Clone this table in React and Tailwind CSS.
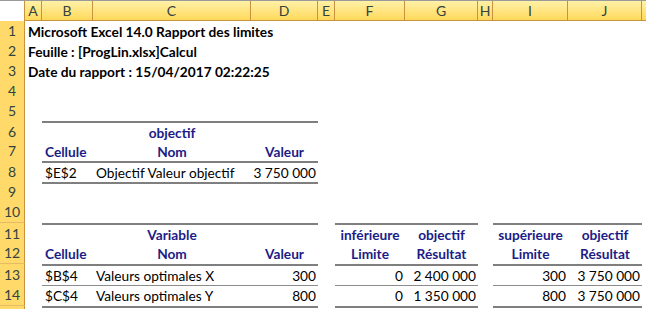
import React from "react";

const GRID = "grid grid-cols-[25px_17px_51px_158px_67px_17px_70px_73px_15px_75px_74px_4px]";
const COLS = ["A", "B", "C", "D", "E", "F", "G", "H", "I", "J"];
const NAVY = "text-[#1c1c86]";
const LINE2 = "border-t-2 border-[#7f7f7f]";
const LINE1 = "border-t border-[#8c8c8c]";

function HeaderRow() {
  return (
    <div className={`${GRID} h-[21px] border-t border-[#9a9a9a]`}>
      <div className="bg-white border-r border-[#c8923e]" />
      {COLS.map((c) => (
        <div
          key={c}
          className="flex items-center justify-center bg-gradient-to-b from-[#fff1a6] to-[#ffd957] border-r border-b border-[#c8923e] text-[14px] leading-[18px] text-[#334340]"
        >
          {c}
        </div>
      ))}
      <div className="bg-gradient-to-b from-[#fff1a6] to-[#ffd957] border-b border-[#c8923e]" />
    </div>
  );
}

function Row({ n, h, cells = {}, span }) {
  return (
    <div className={`${GRID} ${h === 21 ? "h-[21px]" : "h-[20px]"}`}>
      <div className="flex items-end justify-center bg-[#ffda6a] border-r border-r-[#c8923e] border-b border-b-[#e6bb63] text-[14px] leading-[20px] text-[#334340]">
        {n}
      </div>
      {span ? (
        <div className="col-span-11 flex items-end whitespace-nowrap pl-[3px] text-[13.7px] leading-[20px] font-bold text-black">
          {span}
        </div>
      ) : (
        <>
          {COLS.map((c) => {
            const cell = cells[c];
            if (!cell) return <div key={c} />;
            const align =
              cell.a === "c" ? "justify-center" : cell.a === "r" ? "justify-end pr-[2px]" : "justify-start pl-[3px]";
            const line = cell.line === "2" ? LINE2 : cell.line === "1" ? LINE1 : "";
            return (
              <div
                key={c}
                className={`flex items-end whitespace-nowrap text-[13.7px] leading-[20px] ${align} ${line} ${
                  cell.b ? "font-bold" : ""
                } ${cell.n ? NAVY : "text-black"}`}
              >
                {cell.t || ""}
              </div>
            );
          })}
          <div />
        </>
      )}
    </div>
  );
}

const L2 = { line: "2" };
const L1 = { line: "1" };

export default function App() {
  return (
    <div className="w-[646px] h-[309px] overflow-hidden bg-white font-['Lato',sans-serif]">
      <HeaderRow />
      <Row n={1} span="Microsoft Excel 14.0 Rapport des limites" />
      <Row n={2} span="Feuille : [ProgLin.xlsx]Calcul" />
      <Row n={3} span="Date du rapport : 15/04/2017 02:22:25" />
      <Row n={4} />
      <Row n={5} />
      <Row
        n={6}
        cells={{
          B: { ...L2 },
          C: { ...L2, t: "objectif", b: 1, n: 1, a: "c" },
          D: { ...L2 },
        }}
      />
      <Row
        n={7}
        cells={{
          B: { t: "Cellule", b: 1, n: 1 },
          C: { t: "Nom", b: 1, n: 1, a: "c" },
          D: { t: "Valeur", b: 1, n: 1, a: "c" },
        }}
      />
      <Row
        n={8}
        h={21}
        cells={{
          B: { ...L2, t: "$E$2" },
          C: { ...L2, t: "Objectif Valeur objectif" },
          D: { ...L2, t: "3 750 000", a: "r" },
        }}
      />
      <Row n={9} cells={{ B: L2, C: L2, D: L2 }} />
      <Row n={10} h={21} />
      <Row
        n={11}
        cells={{
          B: { ...L2 },
          C: { ...L2, t: "Variable", b: 1, n: 1, a: "c" },
          D: { ...L2 },
          F: { ...L2, t: "inférieure", b: 1, n: 1, a: "c" },
          G: { ...L2, t: "objectif", b: 1, n: 1, a: "c" },
          I: { ...L2, t: "supérieure", b: 1, n: 1, a: "c" },
          J: { ...L2, t: "objectif", b: 1, n: 1, a: "c" },
        }}
      />
      <Row
        n={12}
        h={21}
        cells={{
          B: { t: "Cellule", b: 1, n: 1 },
          C: { t: "Nom", b: 1, n: 1, a: "c" },
          D: { t: "Valeur", b: 1, n: 1, a: "c" },
          F: { t: "Limite", b: 1, n: 1, a: "c" },
          G: { t: "Résultat", b: 1, n: 1, a: "c" },
          I: { t: "Limite", b: 1, n: 1, a: "c" },
          J: { t: "Résultat", b: 1, n: 1, a: "c" },
        }}
      />
      <Row
        n={13}
        h={21}
        cells={{
          B: { ...L2, t: "$B$4" },
          C: { ...L2, t: "Valeurs optimales X" },
          D: { ...L2, t: "300", a: "r" },
          F: { ...L2, t: "0", a: "r" },
          G: { ...L2, t: "2 400 000", a: "r" },
          I: { ...L2, t: "300", a: "r" },
          J: { ...L2, t: "3 750 000", a: "r" },
        }}
      />
      <Row
        n={14}
        h={21}
        cells={{
          B: { ...L1, t: "$C$4" },
          C: { ...L1, t: "Valeurs optimales Y" },
          D: { ...L1, t: "800", a: "r" },
          F: { ...L1, t: "0", a: "r" },
          G: { ...L1, t: "1 350 000", a: "r" },
          I: { ...L1, t: "800", a: "r" },
          J: { ...L1, t: "3 750 000", a: "r" },
        }}
      />
      <Row n="" cells={{ B: L2, C: L2, D: L2, F: L2, G: L2, I: L2, J: L2 }} />
    </div>
  );
}
